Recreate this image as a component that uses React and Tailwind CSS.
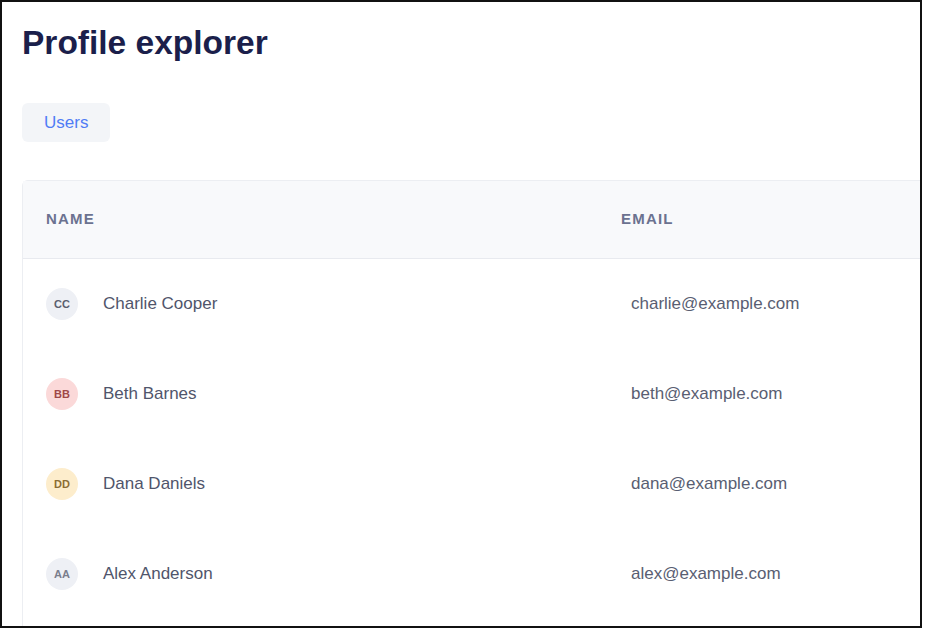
const users = [
    { initials: 'CC', name: 'Charlie Cooper', email: 'charlie@example.com', avatar: 'bg-[#eef0f5] text-[#5b5f6e]' },
    { initials: 'BB', name: 'Beth Barnes', email: 'beth@example.com', avatar: 'bg-[#fbd9d9] text-[#a04848]' },
    { initials: 'DD', name: 'Dana Daniels', email: 'dana@example.com', avatar: 'bg-[#fdedcc] text-[#8c6d34]' },
    { initials: 'AA', name: 'Alex Anderson', email: 'alex@example.com', avatar: 'bg-[#eef0f5] text-[#7a7e8c]' },
];

export default function App() {
    return (
        <div className="w-[922px] h-[628px] border-2 border-[#111] overflow-hidden bg-white pt-[21px] pl-[20px]" style={{ fontFamily: '"Liberation Sans", Arial, sans-serif' }}>
            <h1 className="text-[33.5px] leading-[40px] font-bold text-[#1b1f4b]">Profile explorer</h1>
            {/* tabs */}
            <div className="mt-[40px] flex">
                <button className="h-[39px] px-[22px] rounded-md bg-[#f3f5f8] text-[17px] text-[#4f7cf5]">Users</button>
            </div>
            {/* table card, wider and taller than the window */}
            <div className="mt-[38px] w-[1100px] border border-[#eceef2] rounded-md pb-[60px]">
                <div className="grid grid-cols-[575px_1fr] h-[78px] items-center bg-[#f8f9fb] border-b border-[#e8eaef] text-[15px] font-bold tracking-[0.08em] text-[#6b7290]">
                    <div className="pl-[23px]">NAME</div>
                    <div className="pl-[23px]">EMAIL</div>
                </div>
                {users.map(u => (
                    <div key={u.initials} className="grid grid-cols-[575px_1fr] h-[90px] items-center">
                        <div className="pl-[23px] flex items-center gap-[25px]">
                            <span className={'w-8 h-8 rounded-full flex items-center justify-center text-[11px] font-semibold ' + u.avatar}>{u.initials}</span>
                            <span className="text-[17px] text-[#50556b]">{u.name}</span>
                        </div>
                        <div className="pl-[33px] text-[17px] text-[#595e72]">{u.email}</div>
                    </div>
                ))}
            </div>
        </div>
    );
}
